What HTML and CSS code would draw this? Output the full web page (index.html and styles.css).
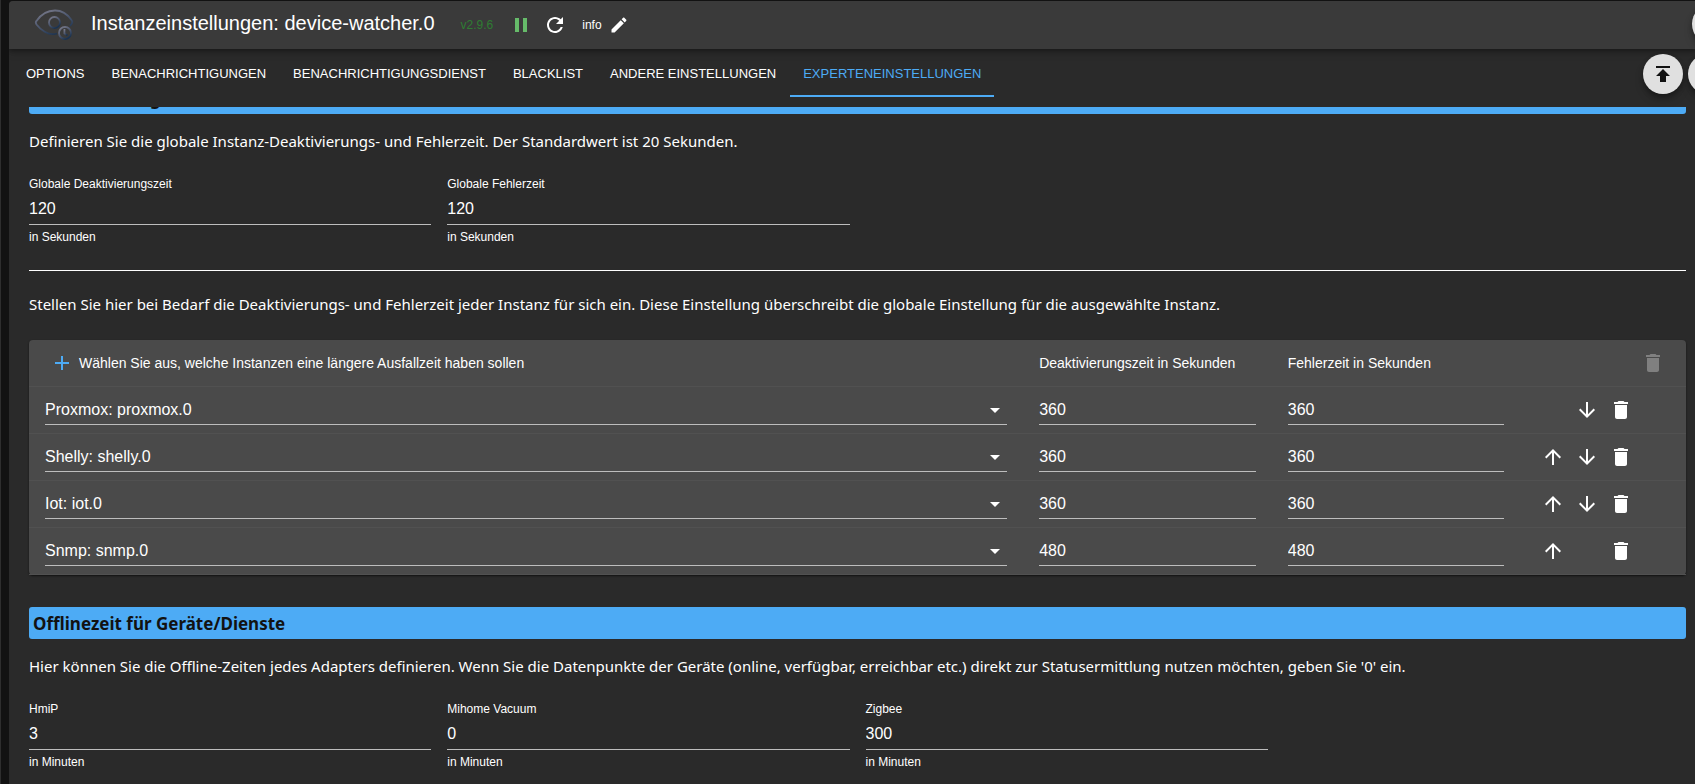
FILE: index.html
```html
<!DOCTYPE html>
<html lang="de">
<head>
  <meta charset="UTF-8">
  <meta name="viewport" content="width=device-width, initial-scale=1.0">
  <title>Instanzeinstellungen: device-watcher.0</title>
  <link rel="stylesheet" href="styles.css">
</head>
<body>
  <!-- shared icons -->
  <svg class="sprite" aria-hidden="true">
    <symbol id="i-down" viewBox="0 0 24 24"><path d="M20 12l-1.41-1.41L13 16.17V4h-2v12.17l-5.58-5.59L4 12l8 8 8-8z"/></symbol>
    <symbol id="i-up" viewBox="0 0 24 24"><path d="M4 12l1.41 1.41L11 7.83V20h2V7.83l5.58 5.59L20 12l-8-8-8 8z"/></symbol>
    <symbol id="i-delete" viewBox="0 0 24 24"><path d="M6 19c0 1.1.9 2 2 2h8c1.1 0 2-.9 2-2V7H6v12zM19 4h-3.500l-1-1h-5l-1 1H5v2h14V4z"/></symbol>
    <symbol id="i-arrow" viewBox="0 0 24 24"><path d="M7 10l5 5 5-5z"/></symbol>
  </svg>

  <div class="window">
    <header class="header">
      <svg class="logo" viewBox="0 0 40 32" fill="none" stroke-width="1.800">
        <defs>
          <linearGradient id="logo-grad" x1="0" y1="0" x2="0.6" y2="1">
            <stop offset="0" stop-color="#7d7d8c"/>
            <stop offset="0.55" stop-color="#4d5870"/>
            <stop offset="1" stop-color="#1c3350"/>
          </linearGradient>
        </defs>
        <g stroke="url(#logo-grad)">
          <path d="M23 24.500C14 27.500 6 20 2.500 15.500C1.500 14 1.500 13 2.500 12C8 4 15 1.500 21 1.500C28 1.500 34 6 37.500 11C39 13 38.500 14 36 17"/>
          <circle cx="20.500" cy="13.500" r="5.500"/>
          <circle cx="31" cy="24" r="6"/>
          <path d="M30.500 20v4.500l3 2"/>
        </g>
      </svg>
      <h1 class="title">Instanzeinstellungen: device-watcher.0</h1>
      <span class="version">v2.9.6</span>
      <button class="icon-btn pause" aria-label="Pause">
        <svg viewBox="0 0 24 24"><path d="M6 19h4V5H6v14zm8-14v14h4V5h-4z"/></svg>
      </button>
      <button class="icon-btn" aria-label="Neu starten">
        <svg viewBox="0 0 24 24"><path d="M17.650 6.350C16.200 4.900 14.210 4 12 4c-4.420 0-7.990 3.580-7.990 8s3.570 8 7.990 8c3.730 0 6.840-2.550 7.730-6h-2.080c-.82 2.330-3.040 4-5.650 4-3.310 0-6-2.690-6-6s2.690-6 6-6c1.660 0 3.140.69 4.220 1.780L13 11h7V4l-2.350 2.350z"/></svg>
      </button>
      <span class="loglevel">info</span>
      <button class="icon-btn edit" aria-label="Bearbeiten">
        <svg viewBox="0 0 24 24"><path d="M3 17.250V21h3.750L17.810 9.940l-3.750-3.750L3 17.250zM20.710 7.040c.39-.39.39-1.020 0-1.410l-2.340-2.340c-.39-.39-1.020-.39-1.410 0l-1.830 1.830 3.750 3.750 1.830-1.830z"/></svg>
      </button>
    </header>

    <nav class="tabs">
      <button class="tab">OPTIONS</button>
      <button class="tab">BENACHRICHTIGUNGEN</button>
      <button class="tab">BENACHRICHTIGUNGSDIENST</button>
      <button class="tab">BLACKLIST</button>
      <button class="tab">ANDERE EINSTELLUNGEN</button>
      <button class="tab active">EXPERTENEINSTELLUNGEN</button>
    </nav>

    <main class="content">
      <h2 class="section scrolled">Zeiteinstellungen</h2>
      <p class="text">Definieren Sie die globale Instanz-Deaktivierungs- und Fehlerzeit. Der Standardwert ist 20 Sekunden.</p>
      <div class="fields">
        <div class="field">
          <label for="deact">Globale Deaktivierungszeit</label>
          <input id="deact" type="text" value="120">
          <small>in Sekunden</small>
        </div>
        <div class="field">
          <label for="error">Globale Fehlerzeit</label>
          <input id="error" type="text" value="120">
          <small>in Sekunden</small>
        </div>
      </div>
      <hr class="divider">
      <p class="text">Stellen Sie hier bei Bedarf die Deaktivierungs- und Fehlerzeit jeder Instanz für sich ein. Diese Einstellung überschreibt die globale Einstellung für die ausgewählte Instanz.</p>

      <table class="table">
        <thead>
          <tr>
            <th class="col-instance">
              <div class="add">
                <button class="icon-btn plus" aria-label="Hinzufügen">
                  <svg viewBox="0 0 24 24"><path d="M19 13h-6v6h-2v-6H5v-2h6V5h2v6h6v2z"/></svg>
                </button>
                <span>Wählen Sie aus, welche Instanzen eine längere Ausfallzeit haben sollen</span>
              </div>
            </th>
            <th class="col-time">Deaktivierungszeit in Sekunden</th>
            <th class="col-time">Fehlerzeit in Sekunden</th>
            <th class="col-actions">
              <div class="actions head">
                <button class="icon-btn" disabled aria-label="Alle löschen"><svg><use href="#i-delete"/></svg></button>
              </div>
            </th>
          </tr>
        </thead>
        <tbody>
          <tr>
            <td><div class="select"><select aria-label="Instanz"><option>Proxmox: proxmox.0</option></select><svg><use href="#i-arrow"/></svg></div></td>
            <td><input type="text" value="360" aria-label="Deaktivierungszeit in Sekunden"></td>
            <td><input type="text" value="360" aria-label="Fehlerzeit in Sekunden"></td>
            <td><div class="actions">
              <span class="spacer"></span>
              <button class="icon-btn" aria-label="Nach unten"><svg><use href="#i-down"/></svg></button>
              <button class="icon-btn" aria-label="Löschen"><svg><use href="#i-delete"/></svg></button>
            </div></td>
          </tr>
          <tr>
            <td><div class="select"><select aria-label="Instanz"><option>Shelly: shelly.0</option></select><svg><use href="#i-arrow"/></svg></div></td>
            <td><input type="text" value="360" aria-label="Deaktivierungszeit in Sekunden"></td>
            <td><input type="text" value="360" aria-label="Fehlerzeit in Sekunden"></td>
            <td><div class="actions">
              <button class="icon-btn" aria-label="Nach oben"><svg><use href="#i-up"/></svg></button>
              <button class="icon-btn" aria-label="Nach unten"><svg><use href="#i-down"/></svg></button>
              <button class="icon-btn" aria-label="Löschen"><svg><use href="#i-delete"/></svg></button>
            </div></td>
          </tr>
          <tr>
            <td><div class="select"><select aria-label="Instanz"><option>Iot: iot.0</option></select><svg><use href="#i-arrow"/></svg></div></td>
            <td><input type="text" value="360" aria-label="Deaktivierungszeit in Sekunden"></td>
            <td><input type="text" value="360" aria-label="Fehlerzeit in Sekunden"></td>
            <td><div class="actions">
              <button class="icon-btn" aria-label="Nach oben"><svg><use href="#i-up"/></svg></button>
              <button class="icon-btn" aria-label="Nach unten"><svg><use href="#i-down"/></svg></button>
              <button class="icon-btn" aria-label="Löschen"><svg><use href="#i-delete"/></svg></button>
            </div></td>
          </tr>
          <tr>
            <td><div class="select"><select aria-label="Instanz"><option>Snmp: snmp.0</option></select><svg><use href="#i-arrow"/></svg></div></td>
            <td><input type="text" value="480" aria-label="Deaktivierungszeit in Sekunden"></td>
            <td><input type="text" value="480" aria-label="Fehlerzeit in Sekunden"></td>
            <td><div class="actions">
              <button class="icon-btn" aria-label="Nach oben"><svg><use href="#i-up"/></svg></button>
              <span class="spacer"></span>
              <button class="icon-btn" aria-label="Löschen"><svg><use href="#i-delete"/></svg></button>
            </div></td>
          </tr>
        </tbody>
      </table>

      <h2 class="section">Offlinezeit für Geräte/Dienste</h2>
      <p class="text">Hier können Sie die Offline-Zeiten jedes Adapters definieren. Wenn Sie die Datenpunkte der Geräte (online, verfügbar, erreichbar etc.) direkt zur Statusermittlung nutzen möchten, geben Sie '0' ein.</p>
      <div class="fields">
        <div class="field">
          <label for="hmip">HmiP</label>
          <input id="hmip" type="text" value="3">
          <small>in Minuten</small>
        </div>
        <div class="field">
          <label for="mihome">Mihome Vacuum</label>
          <input id="mihome" type="text" value="0">
          <small>in Minuten</small>
        </div>
        <div class="field">
          <label for="zigbee">Zigbee</label>
          <input id="zigbee" type="text" value="300">
          <small>in Minuten</small>
        </div>
      </div>
    </main>

    <!-- floating buttons, the right ones run out of the window -->
    <button class="fab fab-help" aria-label="Hilfe"></button>
    <button class="fab fab-upload" aria-label="Hochladen">
      <svg viewBox="0 0 24 24"><path d="M5 4v2h14V4H5zm0 10h4v6h6v-6h4l-7-7-7 7z"/></svg>
    </button>
    <button class="fab fab-download" aria-label="Herunterladen"></button>
  </div>
</body>
</html>
```

FILE: styles.css
```css
* {
  box-sizing: border-box;
}
body {
  margin: 0;
  height: 100vh;
  overflow: hidden;
  background-color: #121212;
  border-left: 1px solid #2e2e2e;
  padding: 1px 0 0 8px;
  color: #fff;
  font-family: "Liberation Sans", Arial, sans-serif;
  font-size: 16px;
}
.sprite {
  display: none;
}
svg {
  display: block;
  fill: currentColor;
}
input,
select,
button {
  font-family: inherit;
  color: inherit;
  background: none;
  border: none;
  border-radius: 0;
  padding: 0;
  margin: 0;
  outline: none;
}
button {
  cursor: pointer;
}
.window {
  position: relative;
  height: 100%;
  display: flex;
  flex-direction: column;
  overflow: hidden;
  background-color: #2a2a2a;
  border-top-left-radius: 4px;
}

/* header */
.header {
  display: flex;
  align-items: center;
  flex: none;
  height: 48px;
  padding-left: 24px;
  background-color: #3a3a3a;
  box-shadow: 0 2px 4px rgba(0, 0, 0, 0.3), 0 4px 8px rgba(0, 0, 0, 0.15);
}
.logo {
  width: 42px;
  height: 32px;
  margin-right: 16px;
  fill: none;
}
.title {
  margin: 0 26px 4px 0;
  font-size: 20px;
  line-height: 32px;
  font-weight: normal;
}
.version,
.loglevel {
  font-size: 12px;
}
.version {
  margin-right: 11px;
  color: #2e7d32;
}
.loglevel {
  margin-left: 10px;
}
.icon-btn {
  display: flex;
  align-items: center;
  justify-content: center;
  width: 34px;
  height: 34px;
}
.icon-btn svg {
  width: 24px;
  height: 24px;
}
.icon-btn:disabled {
  color: #808080;
}
.icon-btn.edit svg {
  width: 20px;
  height: 20px;
}
.pause {
  color: #66bb6a;
}

/* tabs */
.tabs {
  display: flex;
  flex: none;
  gap: 1px;
  height: 48px;
  padding-left: 4px;
}
.tab {
  padding: 2px 13px 0;
  border-bottom: 2px solid transparent;
  font-size: 13px;
}
.tab.active {
  color: #4dabf5;
  border-bottom-color: #4dabf5;
}

/* content */
.content {
  flex: 1;
  margin-top: 10px;
  padding: 0 9px 0 20px;
  overflow: hidden;
}
.section {
  margin: 32px 0 15px;
  height: 32px;
  padding: 0 4px;
  border-radius: 3px;
  background-color: #4dabf5;
  color: #121212;
  font-family: "Noto Sans", sans-serif;
  font-size: 17px;
  line-height: 34px;
}
.section.scrolled {
  margin-top: -25px;
}
.text {
  margin: 0;
  font-family: "Noto Sans", sans-serif;
  font-size: 15px;
  line-height: 24px;
}
.fields {
  display: grid;
  grid-template-columns: repeat(4, 1fr);
  gap: 16px;
  padding-top: 23px;
}
.field {
  display: flex;
  flex-direction: column;
}
.field label,
.field small {
  font-size: 12px;
  line-height: 16px;
}
.field small {
  margin-top: 4px;
}
input,
select {
  display: block;
  width: 100%;
  height: 33px;
  padding-top: 2px;
  border-bottom: 1px solid #bdbdbd;
  font-size: 16px;
}
.divider {
  margin: 25px 0 21px;
  border: none;
  border-top: 1px solid #fff;
}

/* instance table */
.table {
  width: 100%;
  margin-top: 24px;
  table-layout: fixed;
  border-collapse: separate;
  border-spacing: 0;
  border-radius: 4px;
  background-color: #4a4a4a;
  box-shadow: 0 1px 2px rgba(0, 0, 0, 0.6);
}
.table th,
.table td {
  height: 47px;
  padding: 0 16px;
  border-bottom: 1px solid #515151;
  text-align: left;
  font-size: 14px;
  font-weight: normal;
}
.table input,
.table select {
  height: 32px;
  margin-bottom: 2px;
}
.col-instance {
  width: 60%;
}
.col-time {
  width: 15%;
}
.add {
  display: flex;
  align-items: center;
}
.plus {
  color: #4dabf5;
}
.select {
  position: relative;
}
.select select {
  appearance: none;
}
.select svg {
  position: absolute;
  top: 5px;
  right: 0;
  width: 24px;
  height: 24px;
  pointer-events: none;
}
.actions {
  display: flex;
}
.actions.head {
  justify-content: flex-end;
}
.spacer {
  width: 34px;
}

/* floating buttons */
.fab {
  position: absolute;
  display: flex;
  align-items: center;
  justify-content: center;
  width: 40px;
  height: 40px;
  border-radius: 50%;
  background-color: #e0e0e0;
  color: #121212;
  box-shadow: 0 3px 5px rgba(0, 0, 0, 0.3), 0 6px 10px rgba(0, 0, 0, 0.15);
}
.fab svg {
  width: 24px;
  height: 24px;
}
.fab-help {
  top: 3px;
  right: -37px;
}
.fab-upload {
  top: 53px;
  right: 12px;
}
.fab-download {
  top: 53px;
  right: -33px;
}
```
